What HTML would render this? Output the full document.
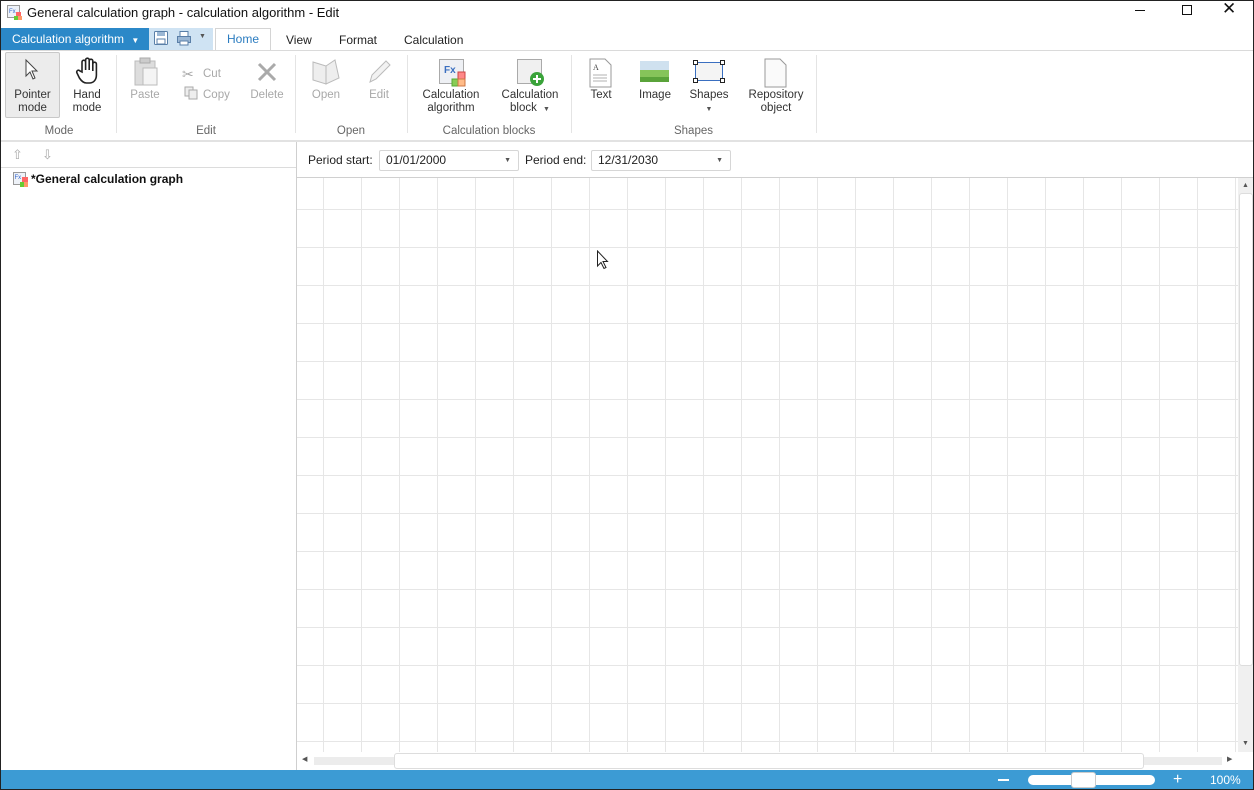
<!DOCTYPE html>
<html><head><meta charset="utf-8"><style>
*{margin:0;padding:0;box-sizing:border-box}
body{width:1254px;height:790px;overflow:hidden;font-family:"Liberation Sans",sans-serif;font-size:12px;color:#222;background:#fff;position:relative}
.a{position:absolute}
.frame{left:0;top:0;width:1254px;height:790px;border:1px solid #222;pointer-events:none;z-index:10}
.lbl{text-align:center;font-size:11.5px;line-height:13px;color:#333}
.dis{color:#a8a8a8}
.grp{font-size:11.5px;color:#666;text-align:center}
.sep{width:1px;background:#e4e4e4;top:55px;height:78px}
</style></head><body>
<div class="a frame"></div>
<!-- title -->
<svg class="a" style="left:7px;top:5px" width="16" height="16"><rect x="0.5" y="0.5" width="12" height="12" fill="#eef2f8" stroke="#999"/><text x="2" y="8" font-size="6" fill="#36c" font-family="Liberation Sans">Fx</text><rect x="9" y="7" width="5" height="4" fill="#f66"/><rect x="7" y="11" width="4" height="4" fill="#6c3"/><rect x="11" y="11" width="4" height="4" fill="#f96"/></svg>
<div class="a" style="left:27px;top:5px;font-size:13px;color:#111">General calculation graph - calculation algorithm - Edit</div>
<div class="a" style="left:1135px;top:10px;width:10px;height:1px;background:#111"></div>
<div class="a" style="left:1182px;top:5px;width:10px;height:10px;border:1px solid #111"></div>
<div class="a" style="left:1222px;top:-1px;font-size:17px;color:#111">✕</div>
<!-- tab row -->
<div class="a" style="left:1px;top:28px;width:148px;height:22px;background:#2b88c8;color:#fff;font-size:12px;line-height:22px;padding-left:11px">Calculation algorithm <span style="font-size:8px;margin-left:4px">▼</span></div>
<div class="a" style="left:149px;top:28px;width:64px;height:22px;background:#cfe3f3"></div>
<svg class="a" style="left:153px;top:30px" width="16" height="16"><rect x="1.5" y="1.5" width="13" height="13" rx="1" fill="#fff" stroke="#5a7fa8"/><rect x="4" y="2" width="8" height="4" fill="#9bb7d4"/><rect x="4" y="9" width="8" height="5" fill="#fff" stroke="#5a7fa8"/></svg>
<svg class="a" style="left:176px;top:30px" width="16" height="16"><rect x="4" y="1.5" width="8" height="5" fill="#fff" stroke="#5a7fa8"/><rect x="1.5" y="6.5" width="13" height="6" fill="#9bb7d4" stroke="#5a7fa8"/><rect x="4" y="11" width="8" height="4" fill="#fff" stroke="#5a7fa8"/></svg>
<div class="a" style="left:199px;top:33px;font-size:7px;color:#555">▼</div>
<div class="a" style="left:215px;top:28px;width:56px;height:23px;background:#fff;border:1px solid #d4d4d4;border-bottom:none;color:#2b7cc0;text-align:center;line-height:21px">Home</div>
<div class="a" style="left:286px;top:33px">View</div>
<div class="a" style="left:339px;top:33px">Format</div>
<div class="a" style="left:404px;top:33px">Calculation</div>
<div class="a" style="left:0;top:50px;width:1254px;height:1px;background:#dadada"></div>
<!-- ribbon -->
<div class="a" style="left:5px;top:52px;width:55px;height:66px;background:#ececec;border:1px solid #c8c8c8;border-radius:2px"></div>
<svg class="a" style="left:22px;top:58px" width="20" height="24"><path d="M4 2 L4 18 L8 14 L11 21 L13 20 L10 13 L15 13 Z" fill="#fff" stroke="#444" stroke-width="1"/></svg>
<div class="a lbl" style="left:5px;top:89px;width:55px">Pointer<br>mode</div>
<svg class="a" style="left:74px;top:57px" width="26" height="28"><path d="M8 15 V5 a1.8 1.8 0 0 1 3.6 0 V13 V3 a1.8 1.8 0 0 1 3.6 0 V13 V4 a1.8 1.8 0 0 1 3.6 0 V14 V7 a1.8 1.8 0 0 1 3.6 0 V18 c0 5 -3 8 -7 8 h-3 c-3 0 -5 -2 -7 -5 L3 16 a1.7 1.7 0 0 1 3 -2 Z" fill="#fff" stroke="#222" stroke-width="1.6"/></svg>
<div class="a lbl" style="left:62px;top:89px;width:50px">Hand<br>mode</div>
<div class="a grp" style="left:5px;top:125px;width:108px">Mode</div>
<div class="a sep" style="left:116px"></div>
<svg class="a" style="left:133px;top:57px" width="28" height="30"><rect x="2" y="4" width="20" height="24" fill="#ddd" stroke="#bbb"/><rect x="7" y="1" width="10" height="5" fill="#ccc" stroke="#aaa"/><rect x="10" y="11" width="14" height="17" fill="#f4f4f4" stroke="#bbb"/></svg>
<div class="a lbl dis" style="left:125px;top:89px;width:40px">Paste</div>
<div class="a dis" style="left:182px;top:66px;font-size:14px">✂</div><div class="a lbl dis" style="left:203px;top:68px">Cut</div>
<svg class="a" style="left:184px;top:86px" width="14" height="14"><rect x="1" y="1" width="8" height="9" fill="#eee" stroke="#aaa"/><rect x="5" y="4" width="8" height="9" fill="#eee" stroke="#aaa"/></svg>
<div class="a lbl dis" style="left:203px;top:89px">Copy</div>
<svg class="a" style="left:257px;top:62px" width="20" height="20"><path d="M2 2 L18 18 M18 2 L2 18" stroke="#aaa" stroke-width="3"/></svg>
<div class="a lbl dis" style="left:245px;top:89px;width:44px">Delete</div>
<div class="a grp" style="left:116px;top:125px;width:180px">Edit</div>
<div class="a sep" style="left:295px"></div>
<svg class="a" style="left:311px;top:58px" width="32" height="28"><path d="M2 4 L15 8 L15 26 L2 22 Z M15 8 L24 2 L28 20 L15 26 Z" fill="#eee" stroke="#bbb"/></svg>
<div class="a lbl dis" style="left:304px;top:89px;width:44px">Open</div>
<svg class="a" style="left:366px;top:58px" width="26" height="28"><path d="M4 24 L6 17 L20 3 L24 7 L10 21 Z" fill="#f2f2f2" stroke="#bbb"/></svg>
<div class="a lbl dis" style="left:362px;top:89px;width:34px">Edit</div>
<div class="a grp" style="left:295px;top:125px;width:112px">Open</div>
<div class="a sep" style="left:407px"></div>
<svg class="a" style="left:439px;top:59px" width="30" height="30"><rect x="0.5" y="0.5" width="24" height="24" fill="#eef0f4" stroke="#aaa"/><text x="5" y="14" font-size="10" font-weight="bold" fill="#3a6fc0" font-family="Liberation Sans">Fx</text><rect x="19" y="13" width="7" height="7" fill="#f88" stroke="#c44"/><rect x="13" y="20" width="7" height="7" fill="#8c5" stroke="#5a3"/><rect x="19" y="20" width="7" height="7" fill="#fb8" stroke="#c74"/></svg>
<div class="a lbl" style="left:417px;top:89px;width:68px">Calculation<br>algorithm</div>
<svg class="a" style="left:517px;top:59px" width="30" height="30"><rect x="0.5" y="0.5" width="24" height="24" fill="#f0f0f0" stroke="#aaa"/><circle cx="20" cy="20" r="7" fill="#3aa33a"/><path d="M20 16 V24 M16 20 H24" stroke="#fff" stroke-width="2"/></svg>
<div class="a lbl" style="left:496px;top:89px;width:68px">Calculation<br>block <span style="font-size:7px;color:#555;margin-left:3px">▼</span></div>
<div class="a grp" style="left:407px;top:125px;width:164px">Calculation blocks</div>
<div class="a sep" style="left:571px"></div>
<svg class="a" style="left:589px;top:58px" width="24" height="30"><path d="M1 1 H16 L22 7 V29 H1 Z" fill="#fff" stroke="#999"/><text x="4" y="12" font-size="8" fill="#444" font-family="Liberation Serif">A</text><path d="M4 17 H18 M4 20 H18 M4 23 H18" stroke="#999" stroke-width="0.8"/></svg>
<div class="a lbl" style="left:585px;top:89px;width:32px">Text</div>
<svg class="a" style="left:640px;top:61px" width="30" height="22"><rect x="0" y="0" width="29" height="21" fill="#cfe1ef"/><rect x="0" y="9" width="29" height="12" fill="#86c45a"/><rect x="0" y="16" width="29" height="5" fill="#5aa33a"/></svg>
<div class="a lbl" style="left:634px;top:89px;width:42px">Image</div>
<svg class="a" style="left:693px;top:60px" width="32" height="24"><rect x="2.5" y="2.5" width="27" height="18" fill="#f4f4f4" stroke="#3a6fc0"/><rect x="0.5" y="0.5" width="4" height="4" fill="#fff" stroke="#222"/><rect x="27.5" y="0.5" width="4" height="4" fill="#fff" stroke="#222"/><rect x="0.5" y="18.5" width="4" height="4" fill="#fff" stroke="#222"/><rect x="27.5" y="18.5" width="4" height="4" fill="#fff" stroke="#222"/></svg>
<div class="a lbl" style="left:686px;top:89px;width:46px">Shapes<br><span style="font-size:7px;color:#555">▼</span></div>
<svg class="a" style="left:764px;top:58px" width="24" height="30"><path d="M1 1 H16 L22 7 V29 H1 Z" fill="#fafafa" stroke="#999"/></svg>
<div class="a lbl" style="left:744px;top:89px;width:64px">Repository<br>object</div>
<div class="a grp" style="left:571px;top:125px;width:245px">Shapes</div>
<div class="a sep" style="left:816px"></div>
<div class="a" style="left:0;top:140px;width:1254px;height:2px;background:#e2e2e2"></div>
<!-- left panel -->
<div class="a" style="left:12px;top:147px;color:#aaa;font-size:13px">⇧</div>
<div class="a" style="left:42px;top:147px;color:#aaa;font-size:13px">⇩</div>
<div class="a" style="left:0;top:167px;width:297px;height:1px;background:#dcdcdc"></div>
<svg class="a" style="left:13px;top:172px" width="16" height="16"><rect x="0.5" y="0.5" width="12" height="12" fill="#eef2f8" stroke="#999"/><text x="1.5" y="7" font-size="6" fill="#36c" font-family="Liberation Sans">Fx</text><rect x="9" y="5" width="6" height="5" fill="#f66"/><rect x="7" y="10" width="4" height="5" fill="#6c3"/><rect x="11" y="10" width="4" height="5" fill="#f96"/></svg>
<div class="a" style="left:31px;top:172px;font-weight:bold;font-size:12px;color:#111">*General calculation graph</div>
<div class="a" style="left:296px;top:142px;width:1px;height:628px;background:#cfcfcf"></div>
<!-- period -->
<div class="a" style="left:308px;top:153px">Period start:</div>
<div class="a" style="left:379px;top:150px;width:140px;height:21px;border:1px solid #d6d6d6;border-radius:2px;line-height:19px;padding-left:6px">01/01/2000<span style="position:absolute;right:7px;font-size:7px;color:#555">▼</span></div>
<div class="a" style="left:525px;top:153px">Period end:</div>
<div class="a" style="left:591px;top:150px;width:140px;height:21px;border:1px solid #d6d6d6;border-radius:2px;line-height:19px;padding-left:6px">12/31/2030<span style="position:absolute;right:7px;font-size:7px;color:#555">▼</span></div>
<div class="a" style="left:297px;top:177px;width:957px;height:1px;background:#d0d0d0"></div>
<!-- canvas -->
<div class="a" style="left:297px;top:178px;width:941px;height:574px;background-color:#fff;background-image:linear-gradient(to right,#e6e6e6 1px,transparent 1px),linear-gradient(to bottom,#e6e6e6 1px,transparent 1px);background-size:38px 38px;background-position:26px 31px"></div>
<svg class="a" style="left:596px;top:250px" width="14" height="20"><path d="M1.5 1 V16 L5 12.5 L8 18.5 L10 17.5 L7 11.5 L11.5 11.5 Z" fill="#fff" stroke="#222"/></svg>
<!-- v scrollbar -->
<div class="a" style="left:1238px;top:178px;width:16px;height:574px;background:#f0f0f0"></div>
<div class="a" style="left:1239px;top:193px;width:14px;height:473px;background:#fff;border:1px solid #ddd;border-radius:3px"></div>
<div class="a" style="left:1242px;top:182px;font-size:7px;color:#555">▲</div>
<div class="a" style="left:1242px;top:740px;font-size:7px;color:#555">▼</div>
<!-- h scrollbar -->
<div class="a" style="left:297px;top:752px;width:941px;height:18px;background:#fff"></div>
<div class="a" style="left:314px;top:757px;width:908px;height:8px;background:#ececec"></div>
<div class="a" style="left:394px;top:753px;width:750px;height:16px;background:#fff;border:1px solid #ddd;border-radius:3px"></div>
<div class="a" style="left:302px;top:755px;font-size:7px;color:#555">◀</div>
<div class="a" style="left:1227px;top:755px;font-size:7px;color:#555">▶</div>
<!-- status -->
<div class="a" style="left:0;top:770px;width:1254px;height:20px;background:#3c9bd4"></div>
<div class="a" style="left:998px;top:779px;width:11px;height:2px;background:#fff"></div>
<div class="a" style="left:1028px;top:775px;width:127px;height:10px;background:#fff;border-radius:5px"></div>
<div class="a" style="left:1071px;top:772px;width:25px;height:16px;background:#fff;border-radius:3px;border:1px solid #ccc"></div>
<div class="a" style="left:1173px;top:771px;color:#fff;font-size:16px;line-height:18px">+</div>
<div class="a" style="left:1210px;top:773px;color:#fff;font-size:12px">100%</div>
</body></html>
